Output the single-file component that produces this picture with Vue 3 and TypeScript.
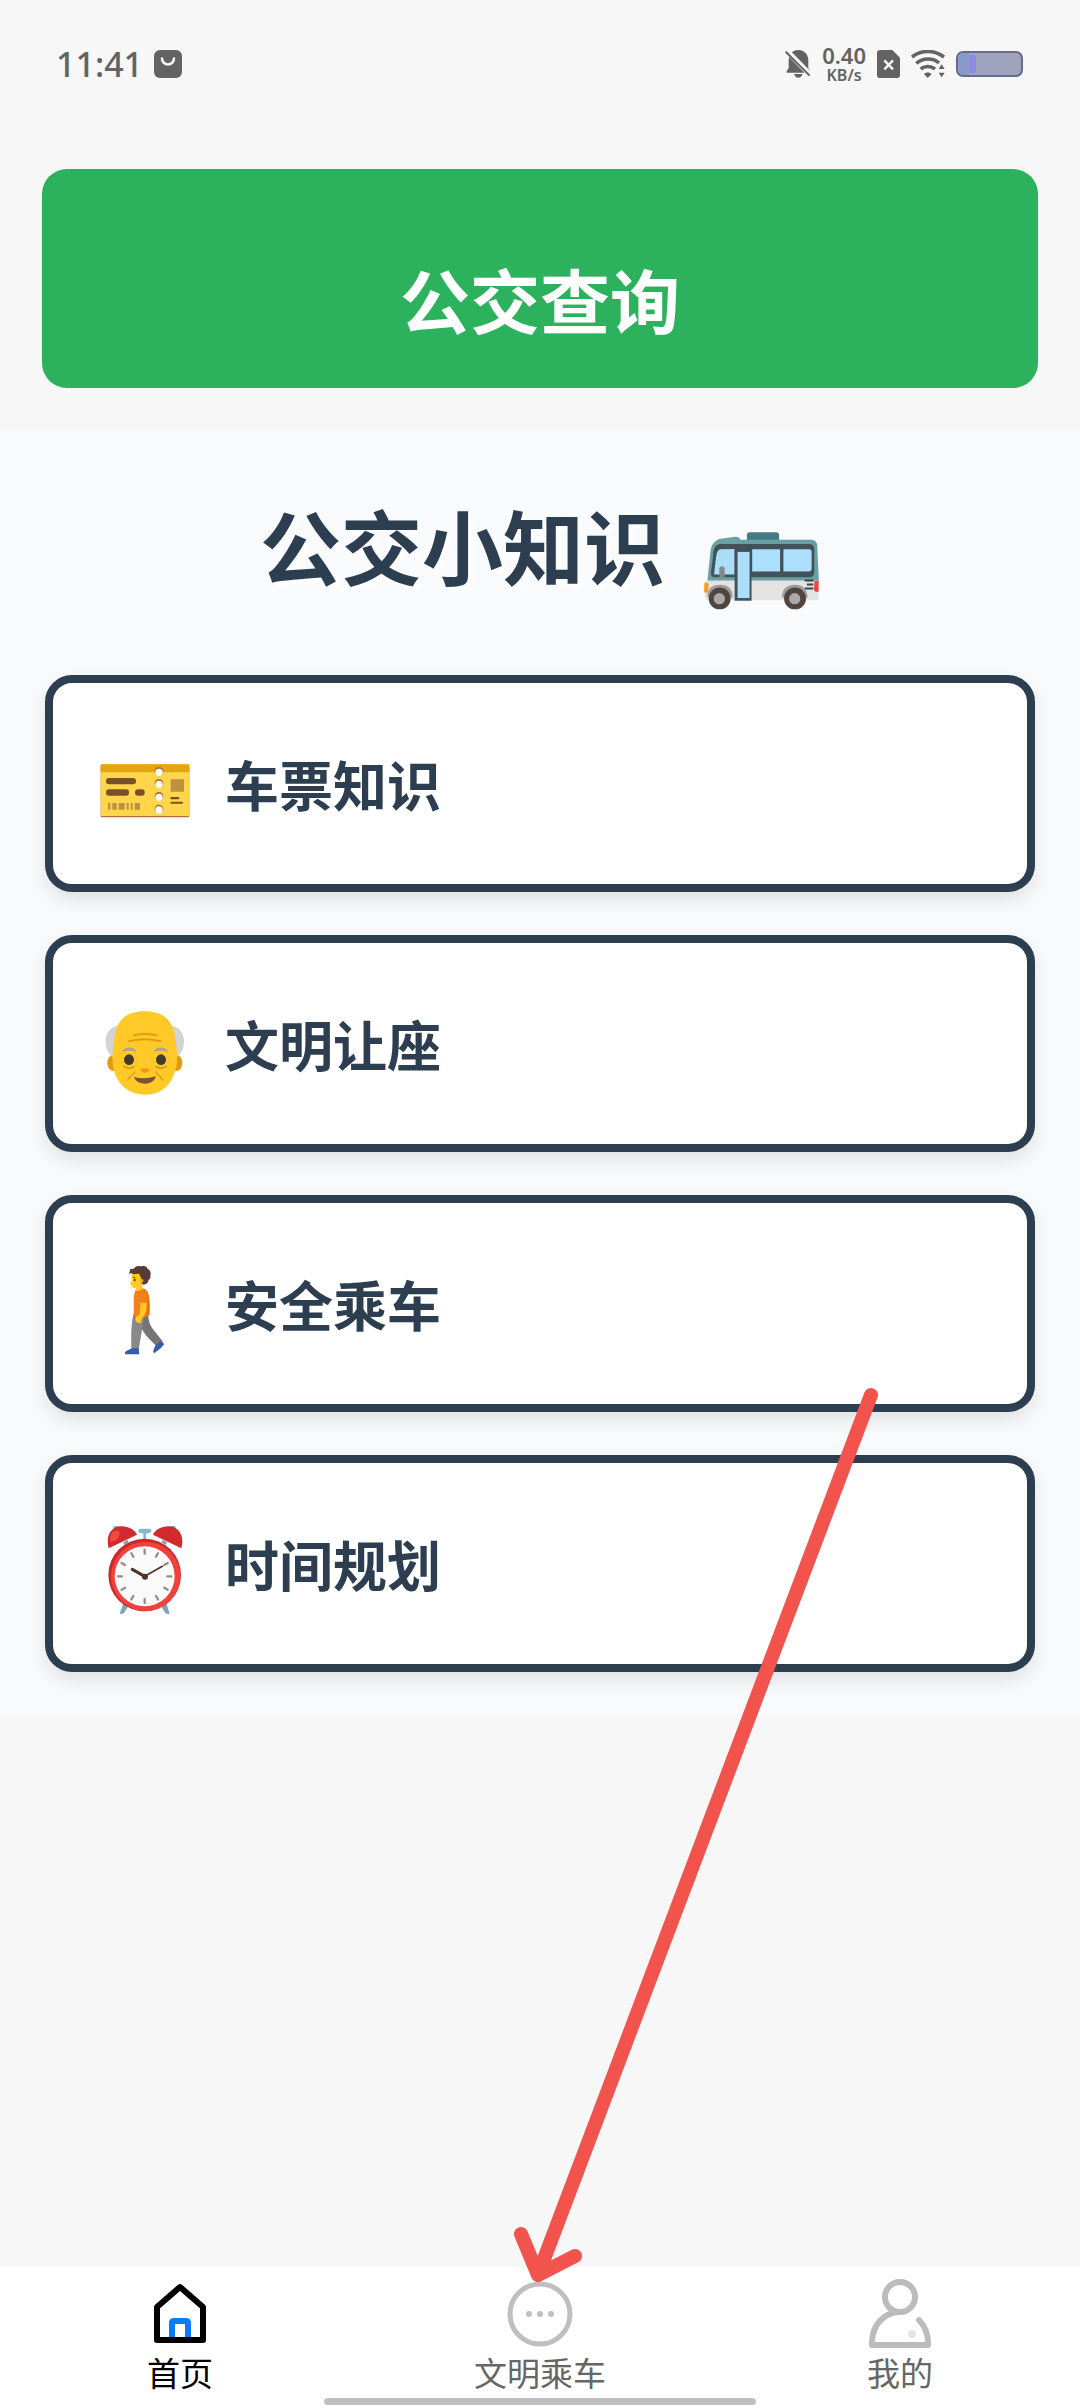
<script setup lang="ts">
interface Topic {
  id: 'ticket' | 'elder' | 'walker' | 'clock'
  label: string
}

interface Tab {
  id: 'home' | 'ride' | 'mine'
  label: string
}

const topics: Topic[] = [
  { id: 'ticket', label: '车票知识' },
  { id: 'elder', label: '文明让座' },
  { id: 'walker', label: '安全乘车' },
  { id: 'clock', label: '时间规划' },
]

const tabs: Tab[] = [
  { id: 'home', label: '首页' },
  { id: 'ride', label: '文明乘车' },
  { id: 'mine', label: '我的' },
]

const activeTab = 'home'
const hourMarks = [0, 30, 60, 90, 120, 150, 180, 210, 240, 270, 300, 330]
</script>

<template>
  <div class="screen">
    <header class="status">
      <div class="status-left">
        <span class="time">11:41</span>
        <svg width="28" height="28" viewBox="0 0 28 28" aria-hidden="true">
          <rect width="28" height="28" rx="6" fill="#636363" />
          <path d="M8 8.500a6 6 0 0 0 12 0" fill="none" stroke="#f7f7f7" stroke-width="2.600" stroke-linecap="round" />
        </svg>
      </div>
      <div class="status-right">
        <svg width="26" height="30" viewBox="0 0 78 90" aria-hidden="true">
          <path d="M40 3c18 0 30 13 30 31v23l6 11v3H5v-4l6-10V34C11 16 22 3 40 3zM27 75h26c-2 7-7 11-13 11s-11-4-13-11z" fill="#636363" />
          <path d="M2 2 78 80" stroke="#f7f7f7" stroke-width="16" />
          <path d="M2 8 74 80" stroke="#636363" stroke-width="6" />
        </svg>
        <div class="speed"><span class="rate">0.40</span><span class="unit">KB/s</span></div>
        <svg width="23" height="28" viewBox="0 0 69 84" aria-hidden="true">
          <path d="M10 0h36l23 23v51a10 10 0 0 1-10 10H10A10 10 0 0 1 0 74V10A10 10 0 0 1 10 0z" fill="#636363" />
          <path d="m22 31 26 27M48 31 22 58" stroke="#f7f7f7" stroke-width="7" />
        </svg>
        <svg width="34" height="28" viewBox="0 0 102 84" aria-hidden="true">
          <g fill="none" stroke="#636363" stroke-width="11">
            <path d="M3 21c28-22 67-22 96 0" />
            <path d="M16 40c20-17 50-17 68-1" />
            <path d="M29 57c12-10 30-10 43 0" />
          </g>
          <path d="M39 72c7-6 16-6 23 0L50 84z" fill="#636363" />
          <path d="m92 43 9 14H83zM92 82l9-14H83z" fill="#636363" />
        </svg>
        <svg width="67" height="26" viewBox="0 0 67 26" aria-hidden="true">
          <rect x="1" y="1" width="65" height="24" rx="6" fill="#9fa3bd" stroke="#646b8c" stroke-width="2" />
          <path d="M7 2h6v22H7a5 5 0 0 1-5-5V7a5 5 0 0 1 5-5z" fill="#899bcb" />
          <rect x="13" y="4" width="7" height="18" rx="2" fill="#8d8bea" />
        </svg>
      </div>
    </header>

    <main>
      <button class="search" type="button">公交查询</button>

      <section class="tips">
        <h1>
          <span>公交小知识</span>
          <svg width="117" height="78" viewBox="43 52 352 235" aria-hidden="true">
            <rect x="175" y="53" width="97" height="40" rx="9" fill="#427b80" />
            <path d="M56 200 66 105q3-22 25-32l49-7q13 0 15 9h215q16 1 17 18l5 115H52z" fill="#69a0a3" />
            <path d="M53 198h338v50q0 10-10 10H62q-13 0-14-13z" fill="#e3e3e3" />
            <path d="M92 88h270q16 0 16 16v69q0 15-16 15H78q-12 0-11-15l8-65q3-16 17-20z" fill="#435159" />
            <path d="m94 104 44-1v77H76l6-52q2-20 12-24z" fill="#abdcf8" />
            <path d="M191 104h84v67h-84z" fill="#ade0fc" />
            <path d="M285 104h77q8 0 8 8v49q0 10-9 10h-76z" fill="#ade0fc" />
            <rect x="138" y="102" width="51" height="157" fill="#435159" />
            <rect x="147" y="112" width="36" height="139" fill="#abdef9" />
            <rect x="92" y="156" width="16" height="34" rx="5" fill="#858789" />
            <path d="M47 205q10-3 13 5l-3 24H46z" fill="#f89a1e" />
            <path d="M379 199h12v33h-9q-5-2-5-8z" fill="#ef4343" />
            <path d="M349 198h27M356 210h19M349 222h26" stroke="#37434a" stroke-width="6" />
            <path d="M56 248q-1-37 38-37t38 39zM281 250q-1-38 37-39t40 39z" fill="#9d9d9d" />
            <circle cx="93" cy="252" r="33" fill="#50463f" />
            <circle cx="320" cy="252" r="33" fill="#50463f" />
            <circle cx="92" cy="253" r="17" fill="#a9a9a9" />
            <circle cx="319" cy="253" r="17" fill="#a9a9a9" />
          </svg>
        </h1>

        <ul class="topics">
          <li v-for="topic in topics" :key="topic.id">
            <button class="topic" type="button">
              <svg v-if="topic.id === 'ticket'" width="90" height="90" viewBox="61 17 270 270" aria-hidden="true">
                <rect x="63" y="75" width="266" height="156" rx="4" fill="#b66d3f" />
                <rect x="63" y="72" width="266" height="155" rx="4" fill="#ffd54b" />
                <path d="M67 72h258q4 0 4 4v20H63V76q0-4 4-4z" fill="#e2a610" />
                <g fill="#785127">
                  <rect x="79" y="113" width="90" height="19" rx="9" />
                  <rect x="79" y="147" width="69" height="19" rx="9" />
                  <rect x="166" y="147" width="29" height="19" rx="9" />
                  <rect x="272" y="170" width="27" height="7" rx="3" />
                  <rect x="272" y="184" width="38" height="6" rx="3" />
                </g>
                <path d="M273 117h40v37h-40zM85 188h7v20h-7zM98 188h13v20H98zM117 188h18v20h-18zM141 188h6v20h-6zM153 188h6v20h-6zM165 188h16v20h-16z" fill="#bd9141" />
                <g v-for="y in [93, 129, 168, 206]" :key="y">
                  <circle cx="238" :cy="y" r="13" fill="#a96d32" />
                  <circle cx="238" :cy="y + 3" r="11" fill="#fff" />
                </g>
              </svg>

              <svg v-else-if="topic.id === 'elder'" width="90" height="90" viewBox="62 49 270 270" aria-hidden="true">
                <ellipse cx="102" cy="220" rx="18" ry="24" fill="#e49a0d" />
                <ellipse cx="292" cy="220" rx="17" ry="24" fill="#e49a0d" />
                <path d="M118 108c-24 1-40 23-39 48 1 27 12 45 32 51zM275 108c24 1 40 23 39 48-1 27-12 45-32 51z" fill="#d3d3d3" />
                <path d="M196 65c58 0 83 28 91 73 7 47 12 88-6 123-15 35-45 54-84 54s-70-19-86-53c-17-36-12-77-5-124 8-46 32-73 90-73z" fill="#ffc928" />
                <g fill="none" stroke="#e69c12" stroke-width="6" stroke-linecap="round">
                  <path d="M164 137q31-8 67 0M149 155q46-13 94 0M134 230q12 10 29 2M231 232q17 8 29-2" />
                  <path d="M167 247q-11 10-22 24M229 247q11 10 21 24" stroke-width="4" />
                </g>
                <path d="M128 187c8-18 37-17 44 0-14-5-28-5-44 0zM222 187c8-18 37-17 45 0-15-5-29-5-45 0z" fill="#ada295" />
                <ellipse cx="149" cy="210" rx="15" ry="16" fill="#443b30" />
                <ellipse cx="245" cy="210" rx="15" ry="16" fill="#443b30" />
                <path d="M183 239q14-6 28 0c-3 14-25 14-28 0z" fill="#f19611" />
                <path d="M164 262q32 9 65-2c-4 29-57 29-65 2z" fill="#785239" />
              </svg>

              <svg v-else-if="topic.id === 'walker'" width="90" height="90" viewBox="62 46 270 270" aria-hidden="true">
                <path d="m184 192 23-1c0 18 5 34 13 43l31 39-17 15c-27-25-47-45-50-66z" fill="#757575" />
                <path d="m162 190 35-2-9 50-10 59h-22c0-37-2-67 6-107z" fill="#898989" />
                <path d="M137 311v-6q3-6 12-8l10-5 19 1 2 18zM222 299l7-17 17-10 9 8-11 13-19 15q-5-1-3-9z" fill="#375da9" />
                <path d="M171 115q23-6 30 3 12 20 9 76-10 8-47 4c2-38-4-65 8-83z" fill="#f58019" />
                <path d="M204 119q10 26 6 74l-13 3 7-38z" fill="#e97010" />
                <path d="M157 70h32v44q-8 9-21 6l1-8q-11 2-12-8l-5-5 5-9z" fill="#ffc928" />
                <path d="M184 156h18l-1 26-14 24-2 12q-17-1-17-14l5-9 8-3z" fill="#ffca28" />
                <path d="m150 66 3-11 10-1q8-11 21-7 17-4 21 7 12 8 8 20 2 11-5 14-3 14-16 14l-6-5-1-15-6-13-16 2-9-4-3 5z" fill="#583d35" />
                <path d="m161 80 7 1" stroke="#583d35" stroke-width="3" />
                <ellipse cx="166" cy="88" rx="3" ry="4" fill="#443b30" />
                <circle cx="186" cy="90" r="6" fill="#f5b51c" />
              </svg>

              <svg v-else width="90" height="90" viewBox="62 46 270 270" aria-hidden="true">
                <path d="m131 280-10 30q8 1 13-3l15-23zM262 280l9 30q-8 1-13-3l-15-23z" fill="#78a7bd" />
                <path d="M184 54h26q7 1 5 9-2 7-15 5v22h-8V68q-15 1-15-8 1-6 7-6z" fill="#84b9cb" />
                <circle cx="110" cy="52" r="8" fill="#86aebd" />
                <circle cx="281" cy="52" r="8" fill="#86aebd" />
                <path d="M88 113c-13-50 20-68 40-66 20 0 40 12 45 25zM306 113c13-50-20-68-40-66-20 0-40 12-45 25z" fill="#d32a30" />
                <path d="M93 95c-3-29 11-39 23-34 9 5 5 17-5 28z" fill="#f04b3b" />
                <path d="m134 99 12-8M249 91l12 8" stroke="#78a7bd" stroke-width="9" />
                <circle cx="196" cy="193" r="109" fill="#cb282e" />
                <circle cx="199" cy="197" r="104" fill="#f1413a" />
                <circle cx="196" cy="197" r="90" fill="#fafafa" />
                <path v-for="mark in hourMarks" :key="mark" d="M196 117v12" :transform="`rotate(${mark} 196 197)`" stroke="#9c8c83" stroke-width="7" stroke-linecap="round" />
                <path d="m159 176 37 21" stroke="#4e332b" stroke-width="9" stroke-linecap="round" />
                <path d="m196 197 53-30" stroke="#4e332b" stroke-width="5" stroke-linecap="round" />
                <circle cx="197" cy="198" r="9" fill="#4e332b" />
              </svg>
              <span>{{ topic.label }}</span>
            </button>
          </li>
        </ul>
      </section>
    </main>

    <nav class="tabs">
      <a v-for="tab in tabs" :key="tab.id" href="#" :class="{ active: tab.id === activeTab }">
        <svg v-if="tab.id === 'home'" width="72" height="72" viewBox="0 0 72 72" aria-hidden="true">
          <path d="M28 61V45q0-2 2-2h12q2 0 2 2v16" fill="none" stroke="#0b7cf8" stroke-width="6" />
          <path d="M13 62V29L36 9l23 20v33z" fill="none" stroke="#000" stroke-width="6" stroke-linejoin="round" />
        </svg>
        <svg v-else-if="tab.id === 'ride'" width="72" height="72" viewBox="0 0 72 72" aria-hidden="true">
          <circle cx="36" cy="36" r="30" fill="none" stroke="#bfbfbf" stroke-width="5" />
          <g fill="#bfbfbf">
            <circle cx="25" cy="36" r="3" />
            <circle cx="36" cy="36" r="3" />
            <circle cx="47" cy="36" r="3" />
          </g>
        </svg>
        <svg v-else width="72" height="72" viewBox="0 0 72 72" aria-hidden="true">
          <g fill="none" stroke="#bcbcbc" stroke-width="6" stroke-linecap="round" stroke-linejoin="round">
            <circle cx="36" cy="19" r="15" />
            <path d="M36 34C20 34 8 47 8 65v2h56v-2c0-10-4-18-9-23" />
          </g>
          <circle cx="48" cy="56" r="4" fill="#e6e6e6" />
        </svg>
        <span>{{ tab.label }}</span>
      </a>
      <div class="home-indicator"></div>
    </nav>

    <svg class="pointer" viewBox="0 0 400 920" aria-hidden="true">
      <path d="M351 27 18 907M1 866l17 41 37-19" fill="none" stroke="#f2534d" stroke-width="14" stroke-linecap="round" stroke-linejoin="round" />
    </svg>
  </div>
</template>

<style>
body {
  margin: 0;
  background: #f7f7f7;
}
</style>

<style scoped>
.screen {
  position: relative;
  display: flex;
  flex-direction: column;
  min-height: 100vh;
  background: #f7f7f7;
  font-family: "Noto Sans CJK SC", sans-serif;
}

svg {
  display: block;
  flex: none;
}

button {
  border: 0;
  font: inherit;
  cursor: pointer;
}

.status {
  display: flex;
  align-items: center;
  justify-content: space-between;
  height: 128px;
  padding: 0 57px 0 56px;
  color: #636363;
  font-family: "Noto Sans", sans-serif;
}

.status-left,
.status-right {
  display: flex;
  align-items: center;
}

.status-left {
  gap: 11px;
}

.status-right {
  gap: 11px;
}

.time {
  font-size: 34px;
  font-weight: 500;
  line-height: 40px;
}

.speed {
  display: flex;
  flex-direction: column;
  align-items: center;
  font-weight: 600;
}

.rate {
  font-size: 22px;
  line-height: 22px;
}

.unit {
  font-size: 16px;
  line-height: 18px;
}

main {
  padding-top: 41px;
}

.search {
  display: block;
  width: calc(100% - 84px);
  height: 219px;
  margin: 0 42px;
  padding: 40px 0 0;
  border-radius: 25px;
  background: #2cb25c;
  color: #fff;
  font-size: 70px;
  font-weight: 700;
  line-height: 90px;
}

.tips {
  margin-top: 43px;
  padding: 47px 45px 43px;
  background: #f8fafc;
  color: #2c3e50;
}

h1 {
  display: flex;
  align-items: flex-end;
  justify-content: center;
  gap: 38px;
  margin: 0;
  font-size: 81px;
  font-weight: 700;
  line-height: 132px;
  text-shadow: 4px 4px 4px #fff;
}

.topics {
  display: flex;
  flex-direction: column;
  gap: 43px;
  margin: 65px 0 0;
  padding: 0;
  list-style: none;
}

.topic {
  display: flex;
  align-items: center;
  gap: 35px;
  box-sizing: border-box;
  width: 100%;
  height: 217px;
  padding: 0 47px;
  border: 8px solid #2c3e50;
  border-radius: 27px;
  background: #fff;
  box-shadow: 0 8px 20px rgba(0, 0, 0, 0.1);
  color: #2c3e50;
  font-size: 54px;
  font-weight: 700;
  line-height: 80px;
}

.topic svg {
  margin-top: 14px;
}

.tabs {
  position: relative;
  display: flex;
  height: 141px;
  margin-top: auto;
  background: #fff;
}

.tabs a {
  display: flex;
  flex: 1;
  flex-direction: column;
  align-items: center;
  padding-top: 11px;
  color: #666;
  font-size: 33px;
  line-height: 44px;
  text-decoration: none;
}

.tabs a.active {
  color: #000;
}

.home-indicator {
  position: absolute;
  bottom: 3px;
  left: 30%;
  width: 40%;
  height: 7px;
  border-radius: 4px;
  background: #bfbfbf;
}

.pointer {
  position: absolute;
  bottom: 120px;
  left: calc(50% - 20px);
  width: 400px;
  height: 920px;
  overflow: visible;
  pointer-events: none;
}
</style>
